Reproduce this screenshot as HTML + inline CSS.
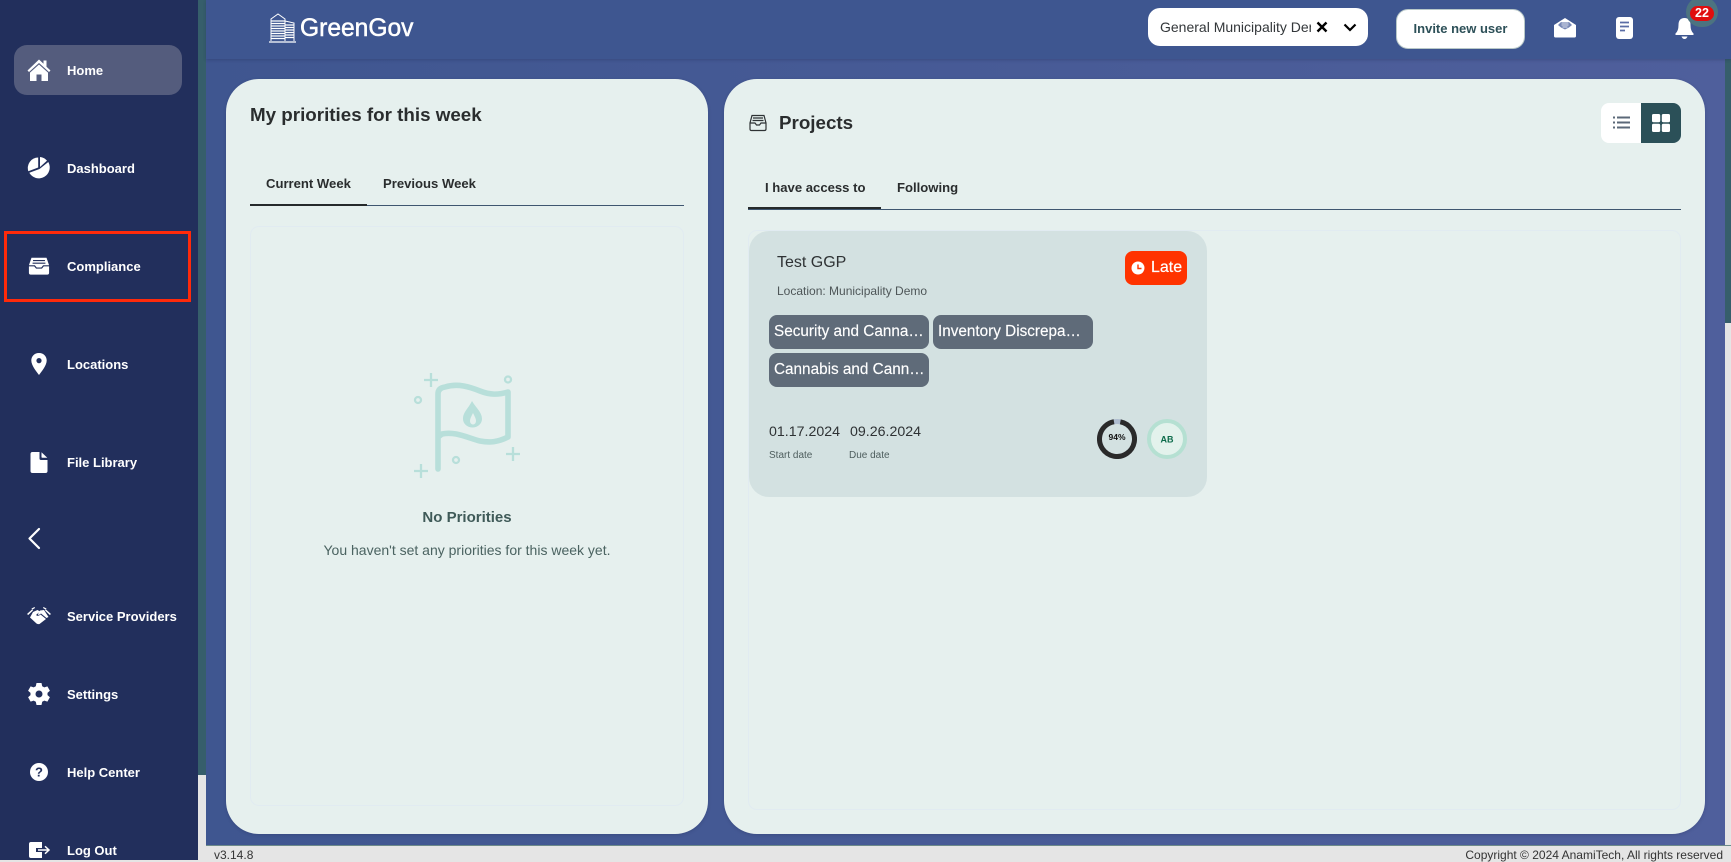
<!DOCTYPE html>
<html>
<head>
<meta charset="utf-8">
<style>
*{box-sizing:border-box;margin:0;padding:0}
html,body{width:1731px;height:860px;overflow:hidden;background:#e5e5e5;font-family:"Liberation Sans",sans-serif}
.a{position:absolute}
.t{position:absolute;white-space:nowrap;line-height:1}
#side{left:0;top:0;width:198px;height:860px;background:#222f5c}
.nav{position:absolute;left:67px;color:#fff;font-weight:700;font-size:13px;line-height:20px;white-space:nowrap}
.ic{position:absolute;left:27px;width:24px;height:24px;fill:#fff}
#main{left:206px;top:59px;width:1519px;height:786px;background:linear-gradient(90deg,#3f5690,#4f5f9c)}
#head{left:206px;top:0;width:1525px;height:59px;background:#3e5690;box-shadow:0 1px 3px rgba(30,40,80,.3)}
.panel{position:absolute;top:79px;height:755px;background:#e6f0ee;border-radius:33px;box-shadow:0 1px 3px rgba(30,40,80,.25)}
.inner{position:absolute;border:1px solid #e1ebf1;border-radius:9px}
.tag{position:absolute;height:34px;width:160px;background:#5f6b79;border-radius:8px;color:#fff;font-size:15.3px;line-height:33px;padding-left:5px;white-space:nowrap;overflow:hidden;-webkit-text-stroke:.15px #fff}
.tabt{position:absolute;font-size:13.1px;font-weight:700;color:#2a2d2e;line-height:18px;white-space:nowrap}
</style>
</head>
<body>
<div class="a" style="left:198px;top:0;width:8px;height:775px;background:#365e6b"></div>
<div class="a" style="left:1725px;top:59px;width:6px;height:264px;background:#365e6b"></div>
<div class="a" id="main"></div>
<div class="a" style="left:206px;top:845px;width:1525px;height:1px;background:#6d8a8a"></div>
<div class="a" id="head"></div>

<div class="a" id="side"></div>
<div class="a" style="left:14px;top:45px;width:168px;height:50px;background:#545c7d;border-radius:13px"></div>
<div class="a" style="left:4px;top:231px;width:187px;height:71px;border:3px solid #ff2a0a"></div>

<div class="nav" style="top:61px">Home</div>
<div class="nav" style="top:159px">Dashboard</div>
<div class="nav" style="top:257px">Compliance</div>
<div class="nav" style="top:355px">Locations</div>
<div class="nav" style="top:453px">File Library</div>
<div class="nav" style="top:607px">Service Providers</div>
<div class="nav" style="top:685px">Settings</div>
<div class="nav" style="top:763px">Help Center</div>
<div class="nav" style="top:841px">Log Out</div>

<svg class="ic" style="top:58px" viewBox="0 0 24 24"><path d="M12 1.5 L0.5 12.5 L2 14 L12 5 L22 14 L23.5 12.5 L19.5 8.7 V2.5 H16.5 V5.8Z"/><path d="M12 6.5 L3 14.6 V23 H9.5 V16.5 H14.5 V23 H21 V14.6Z"/></svg>
<svg class="ic" style="top:156px" viewBox="0 0 24 24"><path d="M11.2 1.5 A10.5 10.5 0 0 0 1.3 15.2 L11.2 11.5Z"/><path d="M13 1 A10.8 10.8 0 0 1 20 4.6 L13 11Z"/><path d="M21.3 6 A10.8 10.8 0 1 1 2.3 16.8 L12.5 13Z"/></svg>
<svg class="a" style="left:28px;top:257px;width:22px;height:18px;fill:#fff" viewBox="0 0 24 24" preserveAspectRatio="none"><path d="M3.8 1 H20.2 L23 11 H16.5 L14.5 14 H9.5 L7.5 11 H1Z M5.5 4 V5.5 H18.5 V4Z M5 7.5 V9 H19 V7.5Z" fill-rule="evenodd"/><path d="M1 12.5 H6.8 L8.8 15.5 H15.2 L17.2 12.5 H23 V21 Q23 23.5 21 23.5 H3 Q1 23.5 1 21Z"/></svg>
<svg class="ic" style="top:352px" viewBox="0 0 24 24"><path fill-rule="evenodd" d="M12 1 C7 1 4.3 4.7 4.3 8.5 C4.3 13.5 9.5 19.5 12 23 C14.5 19.5 19.7 13.5 19.7 8.5 C19.7 4.7 17 1 12 1Z M12 6 A2.6 2.6 0 1 1 12 11.2 A2.6 2.6 0 1 1 12 6Z"/></svg>
<svg class="ic" style="top:450px" viewBox="0 0 24 24"><path d="M3.5 4 Q3.5 2 5.5 2 H12.5 V8.5 Q12.5 10 14 10 H20.5 V21 Q20.5 23 18.5 23 H5.5 Q3.5 23 3.5 21Z"/><path d="M14.5 2.2 L20.3 7.8 H15.5 Q14.5 7.8 14.5 7Z"/></svg>
<svg class="a" style="left:27px;top:526px;width:14px;height:24px" viewBox="0 0 14 24"><path d="M12 3 L2.5 12.5 L12 22" fill="none" stroke="#fff" stroke-width="2.2" stroke-linecap="round" stroke-linejoin="round"/></svg>
<svg class="ic" style="top:604px" viewBox="0 0 24 24"><path d="M6 8 L10.5 6 L13 7.5 L9 11 Q11 13 13.5 10.5 L19 15 L12.5 20 Q11 20.5 9.5 19.5 L3 13.5Z"/><path d="M13 6.5 L17 6 L21.5 13 L19.5 14 L14 9.5 L11.5 11.2 L11 10Z"/><path d="M0 10 L5 5.5 L6 6.5 L1.2 11Z M24 10 L19 5.5 L18 6.5 L22.8 11Z M4.5 4.5 L7.5 3 L8 4 L5.2 5.7Z M19.5 4.5 L16.5 3 L16 4 L18.8 5.7Z"/></svg>
<svg class="ic" style="top:682px" viewBox="0 0 24 24"><path fill-rule="evenodd" d="M9.5 1 H14.5 L15.2 4.2 L17.3 5.4 L20.4 4.4 L22.9 8.7 L20.5 10.9 V13.1 L22.9 15.3 L20.4 19.6 L17.3 18.6 L15.2 19.8 L14.5 23 H9.5 L8.8 19.8 L6.7 18.6 L3.6 19.6 L1.1 15.3 L3.5 13.1 V10.9 L1.1 8.7 L3.6 4.4 L6.7 5.4 L8.8 4.2Z M12 8.5 A3.5 3.5 0 1 0 12 15.5 A3.5 3.5 0 1 0 12 8.5Z"/></svg>
<svg class="ic" style="top:760px" viewBox="0 0 24 24"><circle cx="12" cy="12" r="9"/><text x="12" y="16.5" text-anchor="middle" font-family="Liberation Sans,sans-serif" font-weight="700" font-size="13" fill="#222f5c">?</text></svg>
<svg class="ic" style="top:838px" viewBox="0 0 24 24"><path d="M2 6 Q2 4 4 4 H15 V10 H9 V14 H15 V20 H4 Q2 20 2 18Z"/><path d="M11 12 H21.5 M18 8.3 L22 12 L18 15.7" fill="none" stroke="#fff" stroke-width="1.5"/></svg>

<!-- logo -->
<svg class="a" style="left:269px;top:13px;width:27px;height:30px" viewBox="0 0 27 30" fill="none" stroke="#fff" stroke-width="1"><path d="M2 28 V6 L9 1 L16 6 V28 M16 8 L25 10 V28"/><path d="M2 8 H16 M2 10.5 H16 M2 13 H16 M2 15.5 H16 M2 18 H16 M2 20.5 H16 M2 23 H16 M2 25.5 H16 M16 12 H25 M16 14.5 H25 M16 17 H25 M16 19.5 H25 M16 22 H25 M16 24.5 H25" stroke-width="1.3"/><path d="M0 29 H27" stroke-width="1.2"/></svg>
<div class="t" style="left:300px;top:15px;font-size:24.6px;color:#fff;-webkit-text-stroke:.5px #fff;line-height:28px">GreenGov</div>

<!-- dropdown -->
<div class="a" style="left:1148px;top:8px;width:220px;height:38px;background:#fff;border-radius:12px"></div>
<div class="t" style="left:1160px;top:18px;width:151px;overflow:hidden;font-size:14px;color:#33373a;line-height:18px">General Municipality Demo</div>
<svg class="a" style="left:1316px;top:21px;width:12px;height:12px" viewBox="0 0 12 12"><path d="M1.5 1.5 L10.5 10.5 M10.5 1.5 L1.5 10.5" stroke="#000" stroke-width="2.4"/></svg>
<svg class="a" style="left:1343px;top:23px;width:14px;height:9px" viewBox="0 0 14 9"><path d="M1.5 1.5 L7 7 L12.5 1.5" fill="none" stroke="#000" stroke-width="2.2"/></svg>

<!-- invite -->
<div class="a" style="left:1396px;top:9px;width:129px;height:40px;background:#fff;border:1px solid #b8c8c8;border-radius:12px"></div>
<div class="t" style="left:1396px;top:20px;width:129px;text-align:center;font-size:13px;font-weight:700;color:#2d5058;line-height:18px">Invite new user</div>

<!-- header icons -->
<svg class="a" style="left:1554px;top:18px;width:22px;height:20px" viewBox="0 0 22 20"><path d="M11 0 L22 7 V18 Q22 19.5 20.5 19.5 H1.5 Q0 19.5 0 18 V7Z" fill="#fff"/><path d="M7 4 H15 L18 7 L15 9.5 L11 11.5 L7 9.5 L4 7Z" fill="#7787b5"/><path d="M7.5 5 H14.5 M7.5 7 H14.5 M8.5 9 H13.5" stroke="#fff" stroke-width=".8"/></svg>
<svg class="a" style="left:1616px;top:17px;width:17px;height:22px" viewBox="0 0 17 22"><rect width="17" height="22" rx="3" fill="#fff"/><path d="M4 5.5 H13 M4 9.5 H13 M4 13.5 H9" stroke="#5a6ca5" stroke-width="1.8"/></svg>
<svg class="a" style="left:1675px;top:17px;width:19px;height:23px" viewBox="0 0 19 23"><path d="M9.5 1 Q15.5 1 15.5 8 Q15.5 14 18.5 16.5 V18 H0.5 V16.5 Q3.5 14 3.5 8 Q3.5 1 9.5 1Z" fill="#fff"/><path d="M6.5 19.5 H12.5 Q11.5 22 9.5 22 Q7.5 22 6.5 19.5Z" fill="#fff"/></svg>
<div class="a" style="left:1686px;top:-3px;width:32px;height:30px;background:#4c7380;border-radius:15px"></div>
<div class="a" style="left:1690px;top:6px;width:24px;height:15px;background:#e00d0d;border-radius:8px"></div>
<div class="t" style="left:1690px;top:7px;width:24px;text-align:center;font-size:12.5px;font-weight:700;color:#fff;line-height:13px">22</div>

<!-- left panel -->
<div class="panel" style="left:226px;width:482px"></div>
<div class="t" style="left:250px;top:103px;font-size:18.8px;font-weight:700;color:#2a2d2e;line-height:24px">My priorities for this week</div>
<div class="tabt" style="left:266px;top:175px">Current Week</div>
<div class="tabt" style="left:383px;top:175px">Previous Week</div>
<div class="a" style="left:250px;top:205px;width:434px;height:1px;background:#3f5670"></div>
<div class="a" style="left:250px;top:204px;width:117px;height:2px;background:#262a2b"></div>
<div class="inner" style="left:250px;top:226px;width:434px;height:580px"></div>

<svg class="a" style="left:380px;top:350px;width:200px;height:140px" viewBox="380 350 200 140" fill="none" stroke="#b8dfda" stroke-linecap="round" stroke-linejoin="round">
<path d="M438 469 V394 Q438 388 445 387 C458 383 470 387 480 391 C490 395 498 395 508 392 V437 C498 442 490 443 480 441 C468 438 455 431 442 434 L438 437" stroke-width="5.6"/>
<path d="M472 401 C468 409 463 412 463 419 A9.5 8.5 0 0 0 482 419 C482 412 476 408 472 401Z M473 413 C471 417 470 419 470 421 A3 3.5 0 0 0 476 421 C476 419 475 417 473 413Z" fill="#b8dfda" fill-rule="evenodd" stroke="none"/>
<path d="M431 373 V387 M424 380 H438 M421 464 V478 M414 471 H428 M513 447 V461 M506 454 H520" stroke-width="2.3" stroke-linecap="butt"/>
<circle cx="418" cy="400" r="3" stroke-width="2.3"/>
<circle cx="508" cy="379.5" r="3" stroke-width="2.3"/>
<circle cx="456" cy="460" r="3" stroke-width="2.3"/>
</svg>

<div class="t" style="left:250px;top:509px;width:434px;text-align:center;font-size:15px;font-weight:700;color:#3f5a58;line-height:18px">No Priorities</div>
<div class="t" style="left:250px;top:541px;width:434px;text-align:center;font-size:14px;color:#4b6361;line-height:18px">You haven't set any priorities for this week yet.</div>

<!-- right panel -->
<div class="panel" style="left:724px;width:981px"></div>
<svg class="a" style="left:749px;top:114px;width:18px;height:18px" viewBox="0 0 18 18" fill="none" stroke="#2e3234" stroke-width="1.2"><path d="M3 1.5 H15 L17 9 V15 Q17 16.5 15.5 16.5 H2.5 Q1 16.5 1 15 V9Z"/><path d="M1 9 H6 L7.5 11 H10.5 L12 9 H17"/><path d="M4 4 H14 M3.5 6.5 H14.5"/></svg>
<div class="t" style="left:779px;top:111px;font-size:18.8px;font-weight:700;color:#2a2d2e;line-height:24px">Projects</div>

<div class="a" style="left:1601px;top:103px;width:40px;height:40px;background:#fff;border-radius:8px 0 0 8px"></div>
<div class="a" style="left:1641px;top:103px;width:40px;height:40px;background:#2b5058;border-radius:0 8px 8px 0"></div>
<svg class="a" style="left:1613px;top:115px;width:17px;height:15px" viewBox="0 0 17 15"><path d="M4 2.5 H17 M4 7.5 H17 M4 12.5 H17" stroke="#5b6878" stroke-width="2"/><path d="M0 2.5 H2 M0 7.5 H2 M0 12.5 H2" stroke="#5b6878" stroke-width="2"/></svg>
<svg class="a" style="left:1652px;top:114px;width:18px;height:18px" viewBox="0 0 18 18" fill="#fff"><rect width="8.2" height="8.2" rx="1.5"/><rect x="9.8" width="8.2" height="8.2" rx="1.5"/><rect y="9.8" width="8.2" height="8.2" rx="1.5"/><rect x="9.8" y="9.8" width="8.2" height="8.2" rx="1.5"/></svg>

<div class="tabt" style="left:765px;top:179px">I have access to</div>
<div class="tabt" style="left:897px;top:179px">Following</div>
<div class="a" style="left:748px;top:209px;width:933px;height:1px;background:#3f5670"></div>
<div class="a" style="left:748px;top:207px;width:133px;height:2px;background:#262a2b"></div>
<div class="inner" style="left:748px;top:230px;width:933px;height:580px"></div>

<!-- card -->
<div class="a" style="left:749px;top:231px;width:458px;height:266px;background:#d3e1e1;border-radius:20px"></div>
<div class="t" style="left:777px;top:254px;font-size:16px;color:#2e3234;line-height:18px">Test GGP</div>
<div class="t" style="left:777px;top:283px;font-size:12px;color:#4e5658;line-height:16px">Location: Municipality Demo</div>
<div class="a" style="left:1125px;top:251px;width:62px;height:34px;background:#ff3300;border-radius:8px"></div>
<svg class="a" style="left:1131px;top:261px;width:14px;height:14px" viewBox="0 0 14 14"><circle cx="7" cy="7" r="6.5" fill="#fff"/><path d="M7 3.5 V7.5 H10.5" fill="none" stroke="#ff3300" stroke-width="1.4"/></svg>
<div class="t" style="left:1151px;top:259px;font-size:16px;color:#fff;line-height:18px;-webkit-text-stroke:.2px #fff">Late</div>

<div class="tag" style="left:769px;top:315px">Security and Canna…</div>
<div class="tag" style="left:933px;top:315px">Inventory Discrepa…</div>
<div class="tag" style="left:769px;top:353px">Cannabis and Cann…</div>

<div class="t" style="left:769px;top:424px;font-size:14.2px;color:#2e3234;line-height:16px">01.17.2024</div>
<div class="t" style="left:850px;top:424px;font-size:14.2px;color:#2e3234;line-height:16px">09.26.2024</div>
<div class="t" style="left:769px;top:450px;font-size:10px;color:#4e5e5e;line-height:12px">Start date</div>
<div class="t" style="left:849px;top:450px;font-size:10px;color:#4e5e5e;line-height:12px">Due date</div>

<svg class="a" style="left:1097px;top:419px;width:40px;height:40px" viewBox="0 0 40 40"><circle cx="20" cy="20" r="17.5" fill="none" stroke="#aebccf" stroke-width="5"/><circle cx="20" cy="20" r="17.5" fill="none" stroke="#2a2a2a" stroke-width="5" stroke-dasharray="103.4 110" transform="rotate(-79 20 20)"/><text x="20" y="21" text-anchor="middle" font-family="Liberation Sans,sans-serif" font-size="8.5" font-weight="700" fill="#111">94%</text></svg>
<svg class="a" style="left:1147px;top:419px;width:40px;height:40px" viewBox="0 0 40 40"><circle cx="20" cy="20" r="18" fill="#e3f2ec" stroke="#b5e0d2" stroke-width="4"/><text x="20" y="23.5" text-anchor="middle" font-family="Liberation Sans,sans-serif" font-size="9" font-weight="700" fill="#0c6b4a">AB</text></svg>

<!-- footer -->
<div class="t" style="left:214px;top:848px;font-size:12px;color:#333;line-height:14px">v3.14.8</div>
<div class="t" style="right:8px;top:848px;font-size:12px;color:#333;line-height:14px">Copyright © 2024 AnamiTech, All rights reserved</div>
</body>
</html>
